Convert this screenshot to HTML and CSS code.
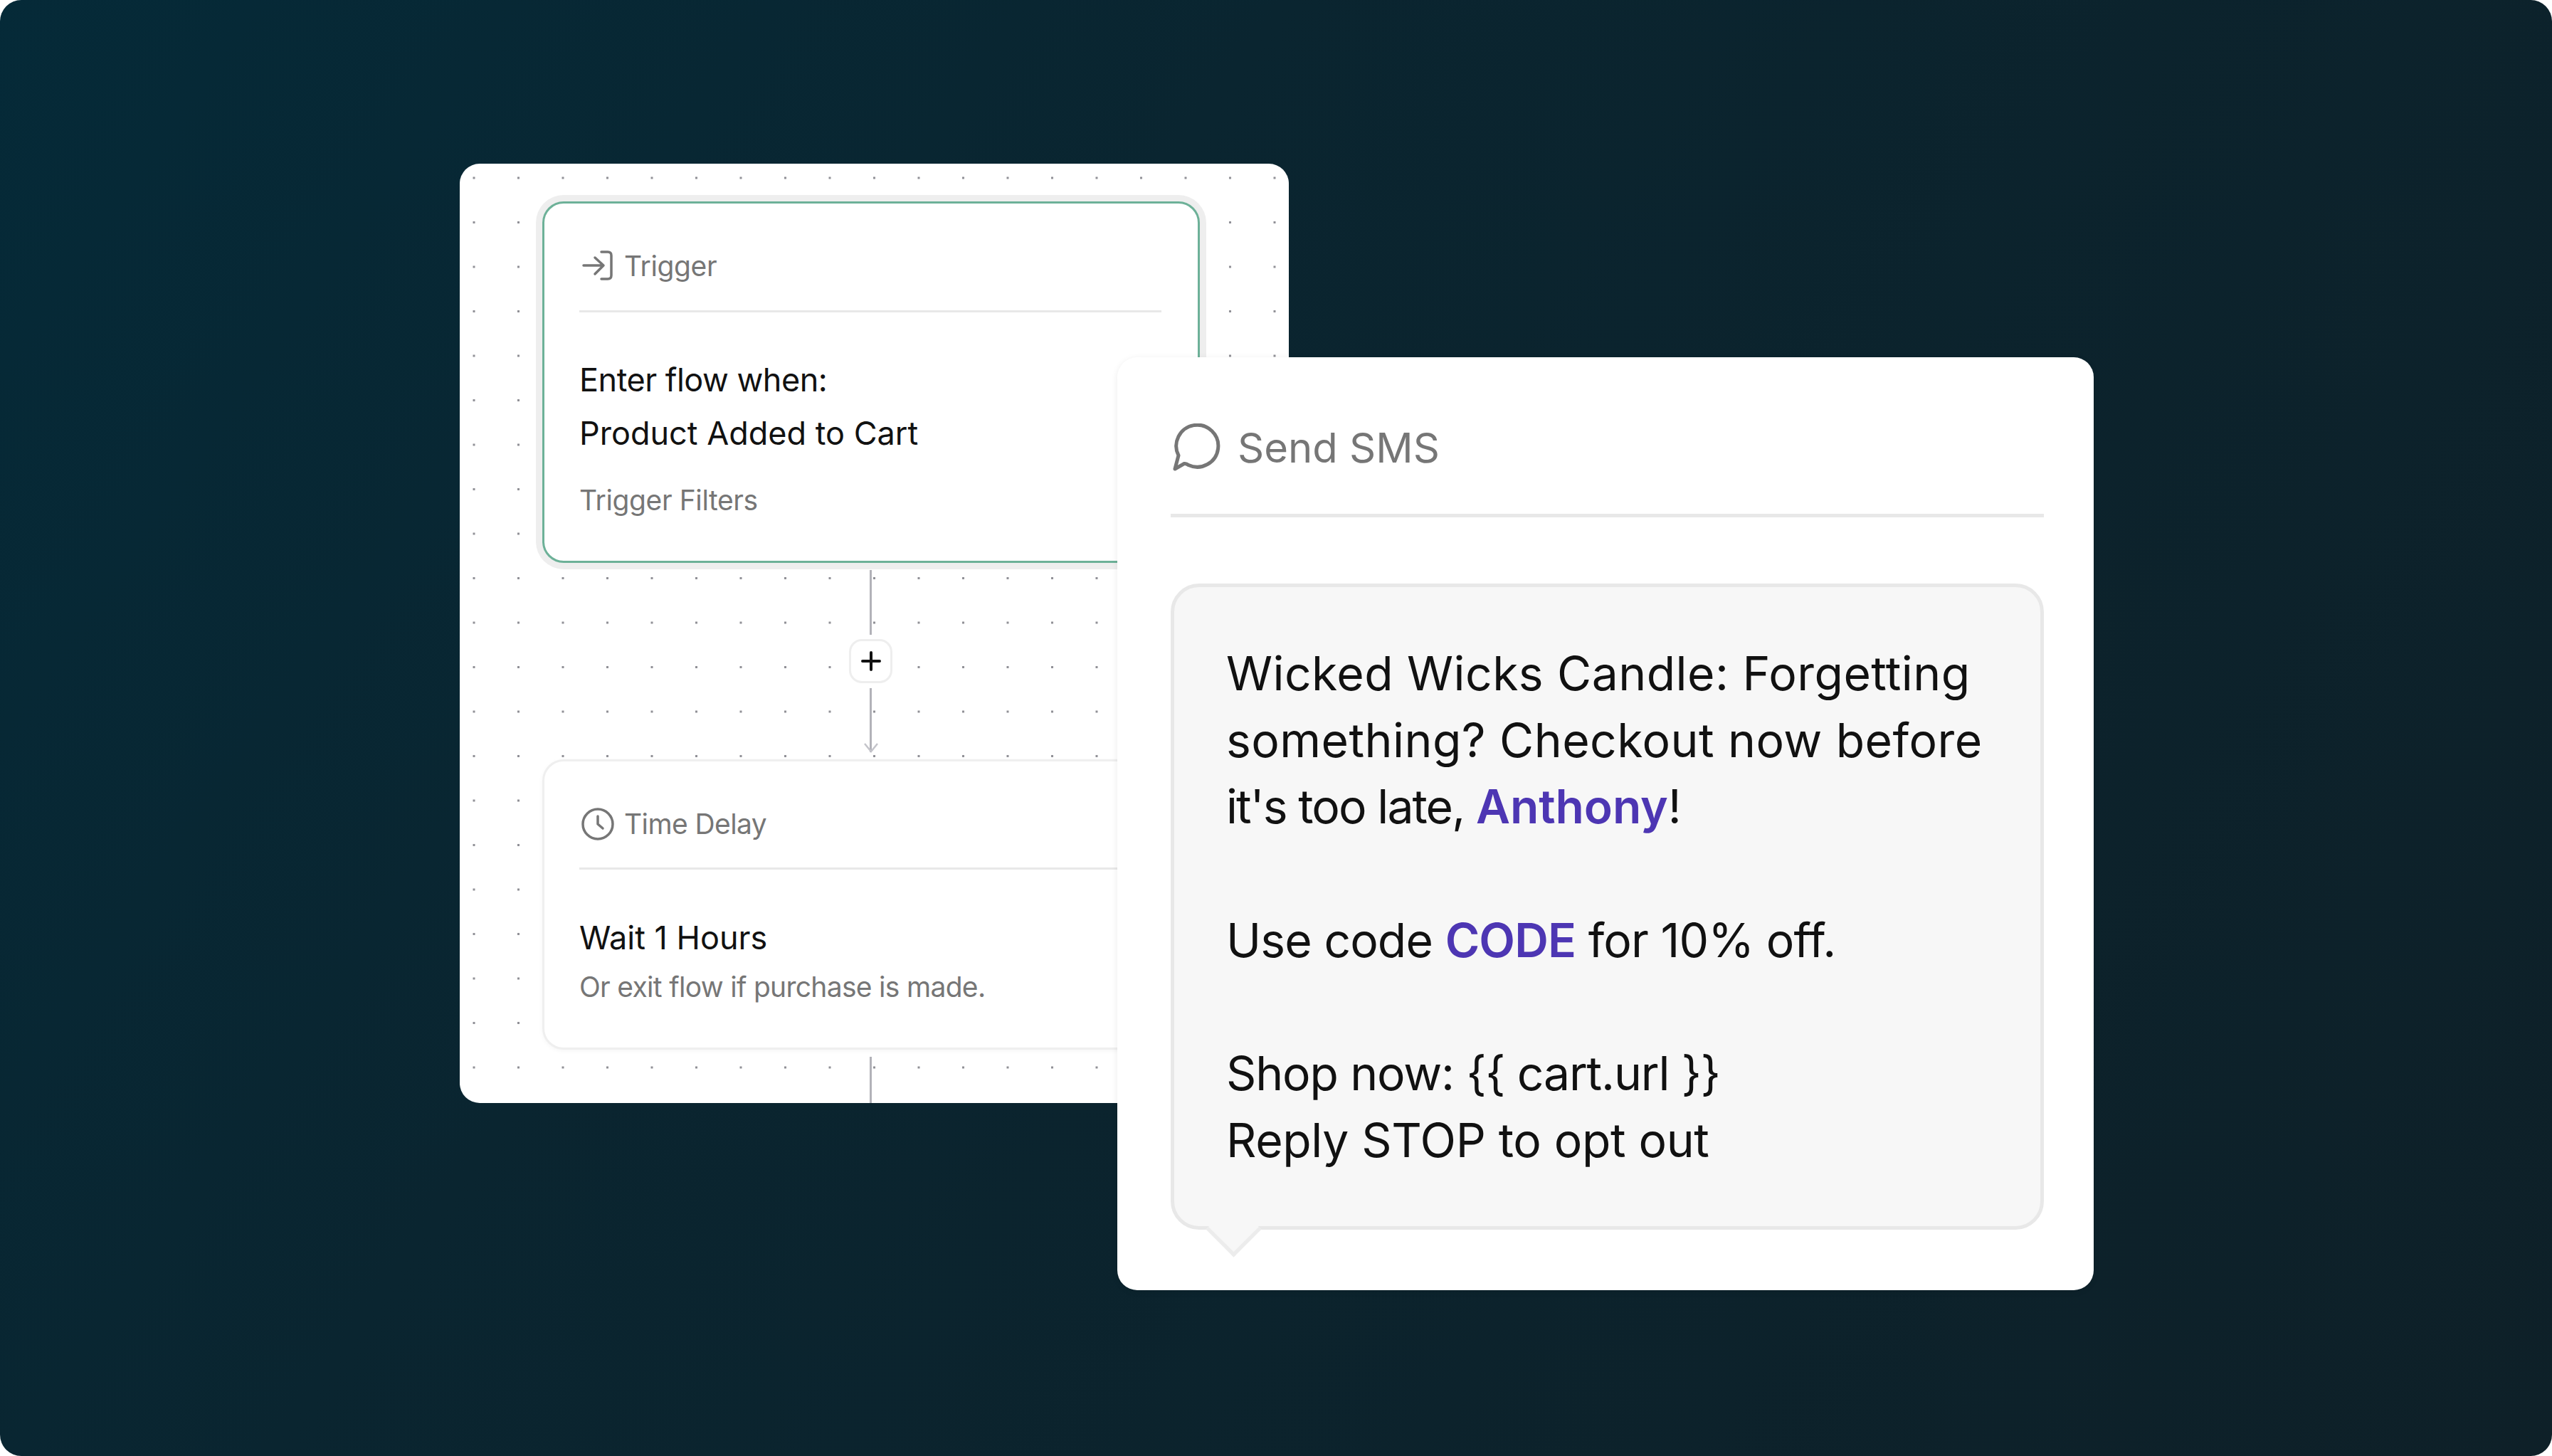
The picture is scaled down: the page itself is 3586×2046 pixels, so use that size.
FILE: index.html
```html
<!DOCTYPE html>
<html lang="en">
<head>
    <meta charset="UTF-8">
    <title>Send SMS flow</title>
    <link rel="stylesheet" href="styles.css">
</head>
<body>

<div class="stage">

    <!-- flow canvas behind -->
    <div class="flow-panel">
        <div class="step step-trigger">
            <div class="step-head">
                <svg class="step-icon" width="44" height="42" viewBox="0 0 44 42" fill="none" stroke="#767676" stroke-width="3.5" stroke-linecap="round" stroke-linejoin="round">
                    <path d="M3 21H31M19 10L31 21L19 33"/>
                    <path d="M28 2H37Q42 2 42 7V35Q42 40 37 40H28"/>
                </svg>
                <span>Trigger</span>
            </div>
            <div class="step-body">
                <p class="step-line">Enter flow when:</p>
                <p class="step-line step-line-wide">Product Added to Cart</p>
                <p class="step-note step-note-gap">Trigger Filters</p>
            </div>
        </div>

        <div class="line line-top"></div>
        <div class="add-button">
            <svg width="28" height="28" viewBox="0 0 28 28" fill="none" stroke="#111" stroke-width="4" stroke-linecap="round">
                <path d="M14 2V26M2 14H26"/>
            </svg>
        </div>
        <div class="line line-arrow"></div>
        <svg class="arrow-head" width="20" height="14" viewBox="0 0 20 14" fill="none" stroke="#c4c4ca" stroke-width="2.5">
            <path d="M1 1L10 12L19 1"/>
        </svg>

        <div class="step step-delay">
            <div class="step-head">
                <svg class="step-icon" width="46" height="46" viewBox="0 0 46 46" fill="none" stroke="#767676" stroke-width="3.5" stroke-linecap="round" stroke-linejoin="round">
                    <circle cx="23" cy="23" r="21"/>
                    <path d="M23 12V23L30 29"/>
                </svg>
                <span>Time Delay</span>
            </div>
            <div class="step-body step-body-delay">
                <p class="step-line step-line-wide">Wait 1 Hours</p>
                <p class="step-note step-note-tight">Or exit flow if purchase is made.</p>
            </div>
        </div>

        <div class="line line-bottom"></div>
    </div>

    <!-- sms card on top -->
    <div class="sms-card">
        <div class="sms-head">
            <svg width="68" height="68" viewBox="0 0 68 68" fill="none" stroke="#767676" stroke-width="5" stroke-linejoin="round">
                <path d="M4 64L9 45A29.5 29.5 0 1 1 23 58.5Q20 56 17 56.5Z"/>
            </svg>
            <span>Send SMS</span>
        </div>
        <div class="bubble">
            <p class="sms-line loose">Wicked Wicks Candle: Forgetting</p>
            <p class="sms-line loose">something? Checkout now before</p>
            <p class="sms-line tight">it's too late, <b>Anthony</b>!</p>
            <p class="sms-line gap">Use code <b>CODE</b> for 10% off.</p>
            <p class="sms-line gap tight-some">Shop now: {{ cart.url }}</p>
            <p class="sms-line">Reply STOP to opt out</p>
        </div>
    </div>

</div>

</body>
</html>
```

FILE: styles.css
```css
html, body {
    margin: 0;
    padding: 0;
    background: #fff;
}
body {
    font-family: Inter, "Noto Sans", sans-serif;
    width: 3586px;
    height: 2046px;
    overflow: hidden;
}
p {
    margin: 0;
}
.stage {
    position: relative;
    width: 3586px;
    height: 2046px;
    border-radius: 30px;
    overflow: hidden;
    background: linear-gradient(125deg, #052a38 0%, #0a2530 36%, #0e2028 100%);
}

/* flow canvas */
.flow-panel {
    position: absolute;
    left: 646px;
    top: 230px;
    width: 1165px;
    height: 1320px;
    box-sizing: border-box;
    padding: 53px 0 0 116px;
    border-radius: 28px;
    overflow: hidden;
    display: flex;
    flex-direction: column;
    background-color: #fff;
    background-image: radial-gradient(circle, #909096 1.6px, transparent 2px);
    background-size: 62.5px 62.5px;
    background-position: -11.25px -11.25px;
}
.step {
    width: 924px;
    box-sizing: border-box;
    flex: none;
    background: #fff;
    border-radius: 30px;
}
.step-trigger {
    height: 508px;
    border: 3px solid #6db198;
    box-shadow: 0 0 0 9px #eeeeee;
}
.step-delay {
    height: 408px;
    margin-top: 9px;
    border: 3px solid #efefef;
    box-shadow: 0 2px 6px rgba(0, 0, 0, 0.04);
}
.step-head {
    display: flex;
    align-items: center;
    gap: 16px;
    height: 126px;
    margin: 0 51px 0 49px;
    padding: 24px 0 0 3px;
    border-bottom: 3px solid #e8e8e8;
    font-size: 39px;
    letter-spacing: -0.4px;
    color: #767676;
}
.step-delay .step-head {
    height: 123px;
    padding-top: 26px;
    gap: 14px;
    letter-spacing: -0.6px;
}
.step-body {
    padding: 57px 51px 0 49px;
}
.step-body-delay {
    padding-top: 58px;
}
.step-line {
    font-size: 45px;
    line-height: 75px;
    letter-spacing: -0.5px;
    color: #111;
}
.step-line-wide {
    letter-spacing: 0;
}
.step-note {
    font-size: 39px;
    line-height: 60px;
    letter-spacing: -0.4px;
    color: #767676;
}
.step-note-gap {
    margin-top: 27px;
}
.step-note-tight {
    margin-top: 2px;
    letter-spacing: -0.7px;
}
.line {
    flex: none;
    width: 3px;
    margin-left: 460px;
    background: #b2b2b9;
}
.line-top {
    height: 91px;
    margin-top: 10px;
}
.add-button {
    flex: none;
    width: 61px;
    height: 62px;
    box-sizing: border-box;
    margin: 6px 0 7px 431px;
    border: 3px solid #eeeeee;
    border-radius: 18px;
    background: #fff;
    display: flex;
    align-items: center;
    justify-content: center;
}
.line-arrow {
    height: 90px;
}
.arrow-head {
    flex: none;
    margin: -13px 0 0 452px;
    display: block;
}
.line-bottom {
    height: 70px;
    margin-top: 10px;
}

/* sms card */
.sms-card {
    position: absolute;
    left: 1570px;
    top: 502px;
    width: 1372px;
    height: 1311px;
    box-sizing: border-box;
    padding: 0 70px 0 75px;
    background: #fff;
    border-radius: 28px;
    box-shadow: 0 2px 10px rgba(0, 0, 0, 0.08);
}
.sms-head {
    display: flex;
    align-items: center;
    gap: 24px;
    height: 186px;
    padding: 34px 0 0 2px;
    border-bottom: 5px solid #e8e8e8;
    font-size: 58px;
    letter-spacing: 0;
    color: #767676;
}
.bubble {
    position: relative;
    height: 908px;
    box-sizing: border-box;
    margin-top: 93px;
    padding: 75px 40px 0 73px;
    background: #f7f7f7;
    border: 5px solid #e8e8e8;
    border-radius: 40px;
    font-size: 66px;
    line-height: 93.7px;
    color: #111;
}
.sms-line {
    letter-spacing: -0.9px;
}
.sms-line.gap {
    margin-top: 93.7px;
}
.sms-line.loose {
    letter-spacing: 0.45px;
}
.sms-line.tight {
    letter-spacing: -1.9px;
}
.sms-line.tight-some {
    letter-spacing: -1.15px;
}
.sms-line:last-child {
    letter-spacing: -0.35px;
}
.bubble b {
    font-weight: 600;
    color: #4d36b3;
}
.bubble .tight b {
    letter-spacing: -0.1px;
}
.bubble::after {
    content: "";
    position: absolute;
    left: 56px;
    bottom: -32px;
    width: 50px;
    height: 50px;
    background: #f7f7f7;
    border-right: 5px solid #ececec;
    border-bottom: 5px solid #ececec;
    transform: rotate(45deg);
}
```
